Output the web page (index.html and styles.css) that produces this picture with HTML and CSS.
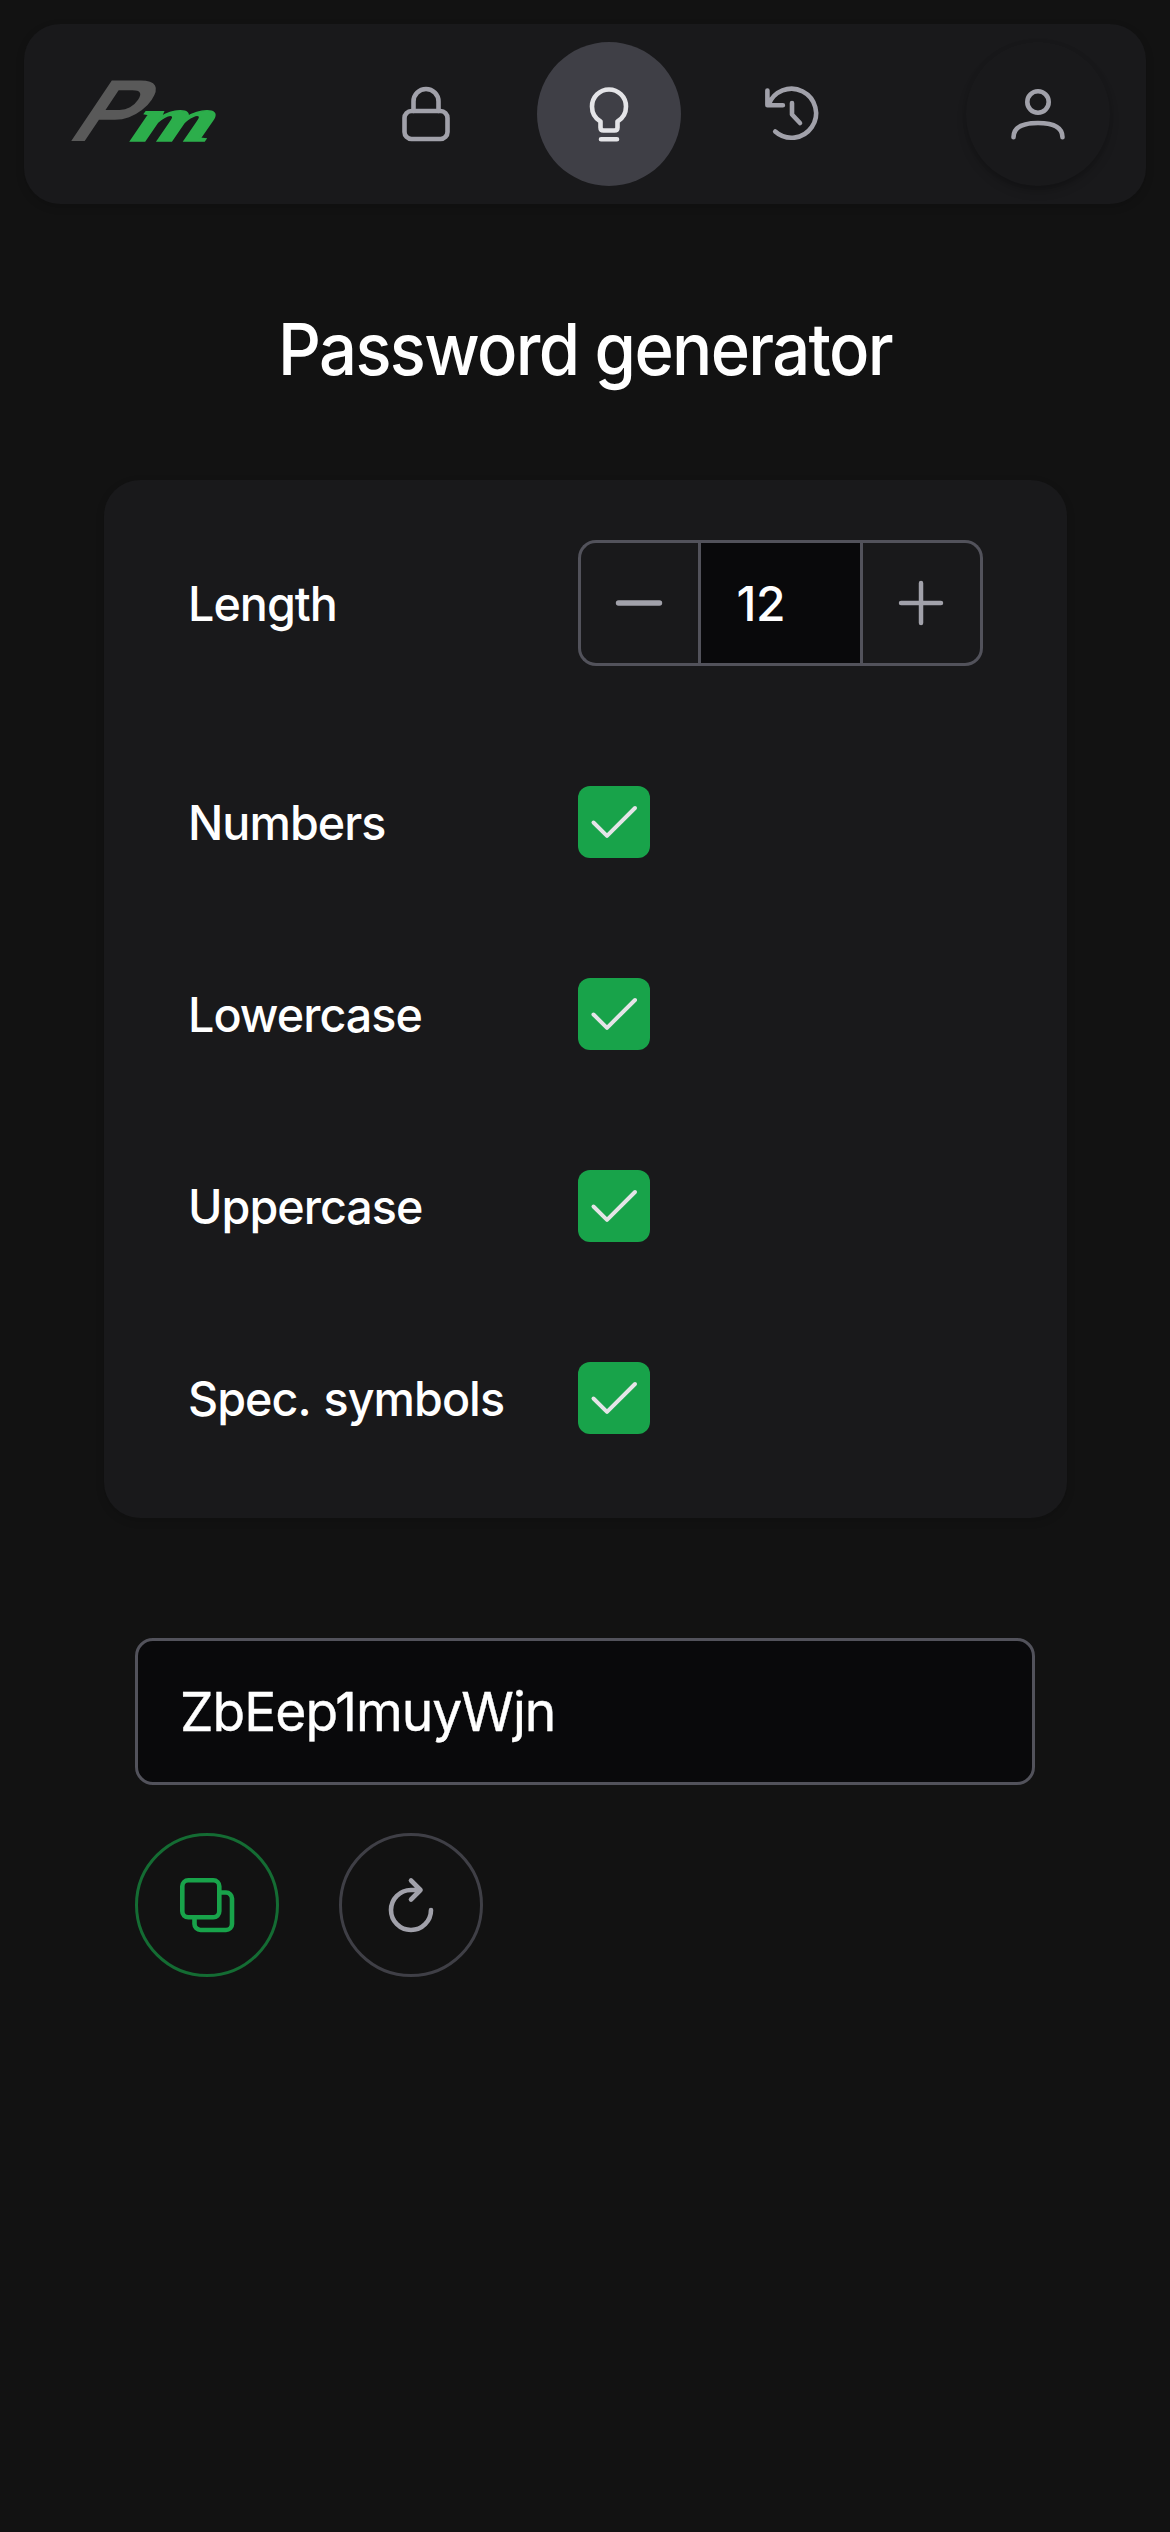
FILE: index.html
```html
<!DOCTYPE html>
<html lang="en">
<head>
  <meta charset="utf-8">
  <title>Password generator</title>
  <link rel="stylesheet" href="styles.css">
</head>
<body>
  <header class="topbar">
    <svg class="logo" viewBox="0 0 150 66" role="img" aria-label="Pm">
      <text class="logo-p" transform="matrix(1.06 0 -0.67 1 -7 60)">P</text>
      <text class="logo-m" transform="matrix(1.62 0 -0.4 1 57 60)">m</text>
    </svg>
    <nav class="nav">
      <a class="nav-item"><svg class="icon" viewBox="0 0 144 144"><rect x="50.500" y="69" width="43" height="28" rx="7"/><path d="M59.500 69V59.500a12.500 12.500 0 0 1 25 0V69"/></svg></a>
      <a class="nav-item active"><svg class="icon" viewBox="0 0 144 144"><path d="M63.500 79.500C58.500 76.500 55 71 55 64.500a17 17 0 0 1 34 0C89 71 85.500 76.500 80.500 79.500V85.500q0 3-3 3h-11q-3 0-3-3zM64 97.300h16"/></svg></a>
      <a class="nav-item"><svg class="icon" viewBox="0 0 144 144"><path d="M47.400 48.500v14.700h15.500M48.500 63A24.500 24.500 0 1 1 55.200 89.500M72 61v11.500l8 8.500"/></svg></a>
    </nav>
    <a class="nav-item user"><svg class="icon" viewBox="0 0 144 144"><circle cx="72" cy="60" r="10.700"/><path d="M47.500 95.300C47.500 84 58 81 72 81s24.500 3 24.500 14.300"/></svg></a>
  </header>

  <main class="page">
    <h1 class="title">Password generator</h1>

    <section class="settings">
      <div class="row row-length">
        <span class="label">Length</span>
        <div class="stepper">
          <button class="step step-minus" type="button"><svg class="icon" viewBox="0 0 120 120"><path class="thick" d="M38.500 60h42"/></svg></button>
          <div class="step-value">12</div>
          <button class="step step-plus" type="button"><svg class="icon" viewBox="0 0 120 120"><path d="M39 60h41M59.500 39.500v41"/></svg></button>
        </div>
      </div>
      <div class="row">
        <span class="label">Numbers</span>
        <span class="check"><svg class="icon" viewBox="0 0 72 72"><path d="M15.500 36.500 29 49.800 57 22"/></svg></span>
      </div>
      <div class="row">
        <span class="label">Lowercase</span>
        <span class="check"><svg class="icon" viewBox="0 0 72 72"><path d="M15.500 36.500 29 49.800 57 22"/></svg></span>
      </div>
      <div class="row">
        <span class="label">Uppercase</span>
        <span class="check"><svg class="icon" viewBox="0 0 72 72"><path d="M15.500 36.500 29 49.800 57 22"/></svg></span>
      </div>
      <div class="row">
        <span class="label">Spec. symbols</span>
        <span class="check"><svg class="icon" viewBox="0 0 72 72"><path d="M15.500 36.500 29 49.800 57 22"/></svg></span>
      </div>
    </section>

    <section class="result">
      <div class="password"><span class="password-text">ZbEep1muyWjn</span></div>
      <div class="actions">
        <button class="round copy" type="button"><svg class="icon" viewBox="0 0 144 144"><rect x="47.300" y="47.300" width="37" height="37" rx="6"/><path d="M86 59.500h5a6 6 0 0 1 6 6V91a6 6 0 0 1-6 6H65.500a6 6 0 0 1-6-6v-5"/></svg></button>
        <button class="round" type="button"><svg class="icon" viewBox="0 0 144 144"><path d="M92 77A20 20 0 1 1 72 57h9.500M72 47.500l9.500 9.500-9.500 9.500"/></svg></button>
      </div>
    </section>
  </main>
</body>
</html>
```
FILE: styles.css
```css
* {
  box-sizing: border-box;
}

body {
  margin: 0;
  min-height: 2532px;
  padding: 24px;
  background: #121212;
  color: #fff;
  font-family: Inter, "Liberation Sans", sans-serif;
}

.icon {
  display: block;
  width: 100%;
  height: 100%;
  fill: none;
  stroke: currentColor;
  stroke-width: 4.6;
  stroke-linecap: round;
  stroke-linejoin: round;
}

.topbar {
  display: flex;
  align-items: center;
  height: 180px;
  padding: 0 36px 0 48px;
  border-radius: 36px;
  background: #19191b;
  box-shadow: 0 3px 9px rgba(0, 0, 0, 0.15);
}

.logo {
  width: 150px;
  height: 66px;
  overflow: visible;
  font-family: "Liberation Sans", sans-serif;
  font-weight: 700;
}

.logo-p {
  fill: #595959;
  font-size: 88px;
}

.logo-m {
  fill: #2cae4b;
  stroke: #2cae4b;
  stroke-width: 1.5px;
  font-family: "Liberation Serif", serif;
  font-size: 64px;
  font-style: italic;
}

.nav {
  display: flex;
  gap: 39px;
  margin-left: 132px;
}

.nav-item {
  width: 144px;
  height: 144px;
  border-radius: 50%;
  color: #a1a1aa;
}

.nav-item.active {
  background: #3f3f46;
  color: #e4e4e7;
}

.nav-item.user {
  margin-left: auto;
  box-shadow: 0 6px 12px -3px rgba(0, 0, 0, 0.3), 0 0 6px rgba(0, 0, 0, 0.04);
}

.page {
  display: flex;
  flex-direction: column;
  align-items: center;
}

.title {
  height: 108px;
  margin: 90px 0 78px;
  font-size: 72px;
  font-weight: 500;
  line-height: 110px;
  letter-spacing: -1.8px;
  transform: scaleX(0.93);
}

.settings {
  width: 963px;
  padding: 0 84px 24px;
  border-radius: 36px;
  background: #19191b;
  box-shadow: 0 3px 9px rgba(0, 0, 0, 0.15);
}

.row {
  display: grid;
  grid-template-columns: 390px 405px;
  align-items: center;
  height: 192px;
}

.row-length {
  height: 246px;
}

.label {
  font-size: 48px;
  font-weight: 500;
  letter-spacing: -1px;
  word-spacing: 2px;
  transform: scaleX(0.972);
  transform-origin: left center;
}

.stepper {
  display: flex;
  height: 126px;
}

.step {
  width: 120px;
  padding: 0;
  border: 3px solid #52525b;
  background: none;
  color: #a1a1aa;
}

.step .icon {
  overflow: visible;
}

.step-minus {
  border-right: 0;
  border-radius: 18px 0 0 18px;
}

.step-plus {
  border-left: 0;
  border-radius: 0 18px 18px 0;
}

.thick {
  stroke-width: 5.6;
}

.step-value {
  flex: 1;
  padding-left: 36px;
  border: 3px solid #52525b;
  background: #09090b;
  font-size: 48px;
  font-weight: 500;
  line-height: 122px;
  letter-spacing: -0.5px;
}

.check {
  width: 72px;
  height: 72px;
  border-radius: 12px;
  background: #18a34a;
  color: #e4e4e7;
}

.check .icon {
  stroke-width: 4;
}

.result {
  width: 900px;
  margin-top: 120px;
}

.password {
  height: 147px;
  padding: 0 42px;
  border: 3px solid #52525b;
  border-radius: 18px;
  background: #09090b;
  font-size: 54px;
  line-height: 141px;
  letter-spacing: -1px;
}

.password-text {
  display: inline-block;
  transform: scaleX(0.988);
  transform-origin: left center;
  -webkit-text-stroke: 0.4px #fff;
}

.actions {
  display: flex;
  gap: 60px;
  margin-top: 48px;
}

.round {
  width: 144px;
  height: 144px;
  padding: 0;
  border: 3px solid #3f3f46;
  border-radius: 50%;
  background: none;
  color: #a1a1aa;
}

.round .icon {
  width: 144px;
  height: 144px;
  margin: -3px;
}

.copy {
  border-color: #146c33;
  color: #18a34a;
}
```
